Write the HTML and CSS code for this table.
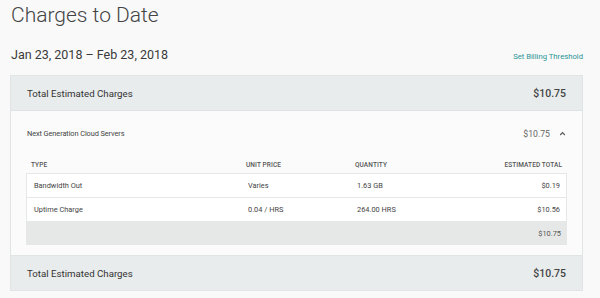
FILE: index.html
```html
<!DOCTYPE html>
<html>
<head>
<meta charset="utf-8">
<link rel="stylesheet" href="styles.css">
</head>
<body>
<div class="page">
  <h1 class="title">Charges to Date</h1>
  <div class="period">
    <span class="dates">Jan 23, 2018 – Feb 23, 2018</span>
    <a class="link">Set Billing Threshold</a>
  </div>
  <div class="panel">
    <div class="band band-top">
      <span class="band-label">Total Estimated Charges</span>
      <span class="band-amount">$10.75</span>
    </div>
    <div class="section">
      <div class="product">
        <span class="product-name">Next Generation Cloud Servers</span>
        <span class="product-total">$10.75
          <svg class="chev" width="7" height="5" viewBox="0 0 7 5"><path d="M1.2 4 L3.5 1.6 L5.8 4" fill="none" stroke="#555" stroke-width="1.1"/></svg>
        </span>
      </div>
      <div class="table">
        <div class="row head">
          <span class="c1">TYPE</span><span class="c2">UNIT PRICE</span><span class="c3">QUANTITY</span><span class="c4">ESTIMATED TOTAL</span>
        </div>
        <div class="row item">
          <span class="c1">Bandwidth Out</span><span class="c2">Varies</span><span class="c3">1.63 GB</span><span class="c4">$0.19</span>
        </div>
        <div class="row item">
          <span class="c1">Uptime Charge</span><span class="c2">0.04 / HRS</span><span class="c3">264.00 HRS</span><span class="c4">$10.56</span>
        </div>
        <div class="row sum">
          <span class="c1"></span><span class="c2"></span><span class="c3"></span><span class="c4">$10.75</span>
        </div>
      </div>
    </div>
    <div class="band band-bottom">
      <span class="band-label">Total Estimated Charges</span>
      <span class="band-amount">$10.75</span>
    </div>
  </div>
</div>
</body>
</html>
```
FILE: styles.css
```css
* { box-sizing: border-box; }
html, body { margin: 0; padding: 0; }
body {
  background: #f9f9f9;
  font-family: Roboto, "Liberation Sans", sans-serif;
  color: #333;
  width: 600px;
  height: 298px;
  overflow: hidden;
}
.page {
  padding: 0 17px 0 10px;
}
.title {
  margin: 0;
  padding-top: 1px;
  padding-left: 1px;
  font-size: 21px;
  font-weight: 300;
  line-height: 28px;
  color: #444;
}
.period {
  display: flex;
  justify-content: space-between;
  align-items: baseline;
  margin-top: 18px;
  height: 28px;
}
.dates {
  font-size: 12.5px;
  line-height: 16px;
  color: #3a3a3a;
  padding-left: 1px;
}
.link {
  font-size: 7.7px;
  color: #2a9496;
}
.panel {
  border: 1px solid #e1e4e4;
  background: #fbfbfb;
  width: 573px;
}
.band {
  display: flex;
  justify-content: space-between;
  align-items: center;
  height: 35px;
  background: #e9ecec;
  padding: 0 16px;
}
.band-top { border-bottom: 1px solid #dfe2e2; }
.band-bottom { border-top: 1px solid #e1e4e4; margin-top: 10px; }
.band-label {
  font-size: 9.7px;
  color: #333;
}
.band-amount {
  font-size: 10.5px;
  font-weight: 500;
  color: #444;
}
.section {
  padding: 0 15px 0 15px;
}
.product {
  display: flex;
  justify-content: space-between;
  align-items: center;
  height: 45px;
  padding: 0 0 0 1px;
}
.product-name {
  font-size: 7.4px;
  letter-spacing: -0.1px;
  color: #444;
}
.product-total {
  font-size: 8.7px;
  color: #666;
  display: flex;
  align-items: center;
  gap: 9px;
  padding-right: 1px;
}
.chev { display: block; }
.table {
  width: 541px;
}
.row {
  display: grid;
  grid-template-columns: 215px 109px 1fr 120px;
  align-items: center;
  padding: 0 6px;
}
.row.head {
  height: 17px;
  font-size: 6.5px;
  font-weight: 500;
  color: #555;
  padding: 0 5px;
  letter-spacing: 0.1px;
}
.row.item {
  height: 24px;
  background: #fff;
  border: 1px solid #e6e8e8;
  border-bottom: none;
  font-size: 7.4px;
  color: #444;
}
.row.sum {
  height: 24px;
  background: #e6e8e8;
  font-size: 7.4px;
  color: #555;
}
.c4 { text-align: right; }
.row.item .c1 { padding-left: 1px; }
```
